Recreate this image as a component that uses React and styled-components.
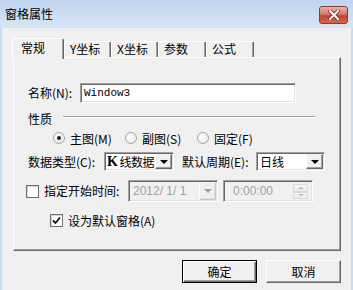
import React from 'react'
import styled, { createGlobalStyle } from 'styled-components'

const GlobalStyle = createGlobalStyle`
  html, body {
    margin: 0;
    padding: 0;
    background: #f0f0f0;
  }
  body {
    font-family: "Noto Sans CJK SC", "Liberation Sans", sans-serif;
    font-size: 12px;
    color: #000;
  }
`

const Window = styled.div`
  width: 353px;
  height: 290px;
  display: flex;
  flex-direction: column;
  overflow: hidden;
  background: #f0f0f0;
`

const TitleBar = styled.div`
  height: 28px;
  flex: none;
  display: flex;
  align-items: center;
  justify-content: space-between;
  padding: 0 5px 0 5px;
  background: linear-gradient(#bfd4ee, #cfdff3 60%, #d6e5f6);
`

const Title = styled.span`
  font-size: 12px;
  line-height: 12px;
  margin-top: -1px;
`

const CloseButton = styled.div`
  width: 27px;
  height: 16px;
  margin-top: 1px;
  border-radius: 3px;
  border: 1px solid #8a3a33;
  background: linear-gradient(#e8b2a8, #d57a6a 45%, #c4432f 55%, #cf6a52);
  display: flex;
  align-items: center;
  justify-content: center;
`

const Body = styled.div`
  flex: 1;
  display: flex;
  flex-direction: column;
  padding: 10px 10px 0 11px;
  border-left: 2px solid #c9dbf0;
  border-right: 2px solid #c9dbf0;
`

const TabStrip = styled.div`
  display: flex;
  align-items: flex-end;
  height: 19px;
  margin-left: -1px;
`

const Tab = styled.div`
  box-sizing: border-box;
  width: ${p => p.$w}px;
  height: ${p => (p.$active ? 21 : 16)}px;
  margin-bottom: ${p => (p.$active ? -2 : 0)}px;
  padding-left: ${p => (p.$active ? 8 : 5)}px;
  padding-top: ${p => (p.$active ? 2 : 0)}px;
  position: relative;
  z-index: ${p => (p.$active ? 2 : 1)};
  background: #f0f0f0;
  border-top: 1px solid #fff;
  border-left: 1px solid #fff;
  border-right: 1px solid #696969;
  box-shadow: inset -1px 0 0 #a0a0a0;
  border-radius: 2px 2px 0 0;
  font-size: 12px;
  line-height: 14px;
  white-space: nowrap;
`

const Panel = styled.div`
  box-sizing: border-box;
  height: 194px;
  border-top: 1px solid #fff;
  border-left: 1px solid #fff;
  border-right: 1px solid #696969;
  border-bottom: 1px solid #696969;
  box-shadow: inset -1px -1px 0 #a0a0a0;
  padding: 25px 0 0 14px;
  display: flex;
  flex-direction: column;
`

const Row = styled.div`
  display: flex;
  align-items: center;
  height: ${p => p.$h}px;
  margin-top: ${p => p.$mt || 0}px;
  padding-left: ${p => p.$pl || 0}px;
`

const Label = styled.span`
  width: ${p => (p.$w ? `${p.$w}px` : 'auto')};
  margin-left: ${p => p.$ml || 0}px;
  flex: none;
  white-space: nowrap;
  font-size: 12px;
  line-height: 14px;
`

const Field = styled.div`
  box-sizing: border-box;
  width: ${p => p.$w}px;
  height: ${p => p.$h}px;
  margin-left: ${p => p.$ml || 0}px;
  flex: none;
  display: flex;
  align-items: stretch;
  border-top: 1px solid #a0a0a0;
  border-left: 1px solid #a0a0a0;
  border-right: 1px solid #fff;
  border-bottom: 1px solid #fff;
  box-shadow: inset 1px 1px 0 #696969, inset -1px -1px 0 #e3e3e3;
  padding: 1px;
  background: ${p => (p.$disabled ? '#f0f0f0' : '#fff')};
  overflow: hidden;
`

const FieldText = styled.div`
  flex: 1;
  min-width: 0;
  display: flex;
  align-items: center;
  padding-left: ${p => p.$pl || 2}px;
  overflow: hidden;
  white-space: nowrap;
  font-family: ${p => (p.$mono ? '"Liberation Mono", monospace' : p.$latin ? '"Liberation Sans", sans-serif' : 'inherit')};
  font-size: ${p => p.$size || 12}px;
  letter-spacing: ${p => p.$ls || 0}px;
  color: ${p => (p.$disabled ? '#a0a0a0' : '#000')};
`

const BoldK = styled.span`
  font-family: "Liberation Serif", serif;
  font-weight: bold;
  font-size: 14px;
  margin-right: 2px;
`

const DropButton = styled.div`
  box-sizing: border-box;
  width: 17px;
  flex: none;
  background: #f0f0f0;
  border-top: 1px solid ${p => (p.$disabled ? '#f4f4f4' : '#f0f0f0')};
  border-left: 1px solid #fff;
  border-right: 1px solid ${p => (p.$disabled ? '#c8c8c8' : '#696969')};
  border-bottom: 1px solid ${p => (p.$disabled ? '#c8c8c8' : '#696969')};
  box-shadow: inset -1px -1px 0 ${p => (p.$disabled ? '#e0e0e0' : '#a0a0a0')};
  display: flex;
  align-items: center;
  justify-content: center;
`

const Arrow = styled.div`
  width: 0;
  height: 0;
  border-left: 4px solid transparent;
  border-right: 4px solid transparent;
  border-top: 4px solid ${p => p.$color || '#000'};
`

const SmallArrow = styled.div`
  width: 0;
  height: 0;
  border-left: 3px solid transparent;
  border-right: 3px solid transparent;
  border-${p => (p.$up ? 'bottom' : 'top')}: 2px solid #b4b4b4;
`

const Spin = styled.div`
  width: 15px;
  margin: 2px 3px 1px auto;
  display: flex;
  flex-direction: column;
`

const SpinHalf = styled.div`
  flex: 1;
  box-sizing: border-box;
  border: 1px solid #dadada;
  background: linear-gradient(#f6f6f6, #e9e9e9);
  display: flex;
  align-items: center;
  justify-content: center;
`

const GroupHeader = styled.div`
  display: flex;
  align-items: center;
  width: 287px;
  height: 14px;
  margin-top: 9px;
`

const GroupLine = styled.div`
  flex: 1;
  margin-left: 11px;
  margin-top: -5px;
  border-top: 1px solid #a0a0a0;
  border-bottom: 1px solid #fff;
`

const RadioItem = styled.div`
  width: 72px;
  display: flex;
  align-items: center;
  gap: 5px;
  white-space: nowrap;
`

const RadioCircle = styled.div`
  box-sizing: border-box;
  width: 12px;
  height: 12px;
  flex: none;
  border-radius: 50%;
  border: 1px solid #a7a7a7;
  background: radial-gradient(circle at 40% 35%, #fff, #e4e4e4);
  display: flex;
  align-items: center;
  justify-content: center;
  &::after {
    content: '';
    width: 4px;
    height: 4px;
    border-radius: 50%;
    background: ${p => (p.$checked ? '#1a1a1a' : 'transparent')};
  }
`

const CheckBox = styled.div`
  box-sizing: border-box;
  width: 13px;
  height: 13px;
  flex: none;
  margin-left: ${p => p.$ml || 0}px;
  margin-right: ${p => p.$mr}px;
  border: 1px solid #707070;
  box-shadow: inset 1px 1px 0 #d6d6d6;
  background: #fff;
  display: flex;
  align-items: center;
  justify-content: center;
`

const ButtonRow = styled.div`
  display: flex;
  justify-content: flex-end;
  gap: 9px;
  margin-top: 9px;
`

const Button = styled.div`
  box-sizing: border-box;
  width: 75px;
  height: 23px;
  display: flex;
  align-items: center;
  justify-content: center;
  background: #f0f0f0;
  border-top: 1px solid ${p => (p.$default ? '#000' : '#fff')};
  border-left: 1px solid ${p => (p.$default ? '#000' : '#fff')};
  border-right: 1px solid ${p => (p.$default ? '#000' : '#696969')};
  border-bottom: 1px solid ${p => (p.$default ? '#000' : '#696969')};
  box-shadow: ${p =>
    p.$default
      ? 'inset 1px 1px 0 #fff, inset -1px -1px 0 #696969, inset -2px -2px 0 #a0a0a0'
      : 'inset -1px -1px 0 #a0a0a0'};
  font-size: 12px;
`

const CloseIcon = () => (
  <svg width="12" height="10" viewBox="0 0 12 10">
    <path d="M2 1 L10 9 M10 1 L2 9" stroke="#6b2a22" strokeWidth="3.6" strokeLinecap="square" />
    <path d="M2 1 L10 9 M10 1 L2 9" stroke="#fff" strokeWidth="2" strokeLinecap="square" />
  </svg>
)

const CheckMark = () => (
  <svg width="9" height="9" viewBox="0 0 9 9">
    <path d="M1 4.5 L3.5 7 L8 1.5" stroke="#111" strokeWidth="1.8" fill="none" />
  </svg>
)

const tabs = [
  { label: '常规', w: 52, active: true },
  { label: 'Y坐标', w: 47 },
  { label: 'X坐标', w: 47 },
  { label: '参数', w: 48 },
  { label: '公式', w: 48 },
]

const App = () => {
  return (
    <Window>
      <GlobalStyle />
      <TitleBar>
        <Title>窗格属性</Title>
        <CloseButton>
          <CloseIcon />
        </CloseButton>
      </TitleBar>
      <Body>
        <TabStrip>
          {tabs.map(t => (
            <Tab key={t.label} $w={t.w} $active={t.active}>
              {t.label}
            </Tab>
          ))}
        </TabStrip>
        <Panel>
          <Row $h={20}>
            <Label $w={52}>名称(N):</Label>
            <Field $w={216} $h={20}>
              <FieldText $mono $size={11}>Window3</FieldText>
            </Field>
          </Row>

          <GroupHeader>
            <Label>性质</Label>
            <GroupLine />
          </GroupHeader>

          <Row $h={14} $mt={5} $pl={25}>
            <RadioItem>
              <RadioCircle $checked />
              主图(M)
            </RadioItem>
            <RadioItem>
              <RadioCircle />
              副图(S)
            </RadioItem>
            <RadioItem>
              <RadioCircle />
              固定(F)
            </RadioItem>
          </Row>

          <Row $h={19} $mt={7}>
            <Label $w={76}>数据类型(C):</Label>
            <Field $w={70} $h={19}>
              <FieldText $pl={1} $ls={-0.5}>
                <BoldK>K</BoldK>线数据
              </FieldText>
              <DropButton>
                <Arrow />
              </DropButton>
            </Field>
            <Label $w={74} $ml={8}>默认周期(E):</Label>
            <Field $w={69} $h={19}>
              <FieldText $pl={2}>日线</FieldText>
              <DropButton>
                <Arrow />
              </DropButton>
            </Field>
          </Row>

          <Row $h={22} $mt={9}>
            <CheckBox $ml={-2} $mr={5} />
            <Label $w={84}>指定开始时间:</Label>
            <Field $w={90} $h={22} $disabled>
              <FieldText $latin $disabled $pl={3}>2012/ 1/ 1</FieldText>
              <DropButton $disabled>
                <Arrow $color="#a0a0a0" />
              </DropButton>
            </Field>
            <Field $w={90} $h={22} $ml={5} $disabled>
              <FieldText $latin $disabled $pl={8}>0:00:00</FieldText>
              <Spin>
                <SpinHalf>
                  <SmallArrow $up />
                </SpinHalf>
                <SpinHalf>
                  <SmallArrow />
                </SpinHalf>
              </Spin>
            </Field>
          </Row>

          <Row $h={15} $mt={11} $pl={22}>
            <CheckBox $mr={5}>
              <CheckMark />
            </CheckBox>
            <Label>设为默认窗格(A)</Label>
          </Row>
        </Panel>
        <ButtonRow>
          <Button $default>确定</Button>
          <Button>取消</Button>
        </ButtonRow>
      </Body>
    </Window>
  )
}

export default App
